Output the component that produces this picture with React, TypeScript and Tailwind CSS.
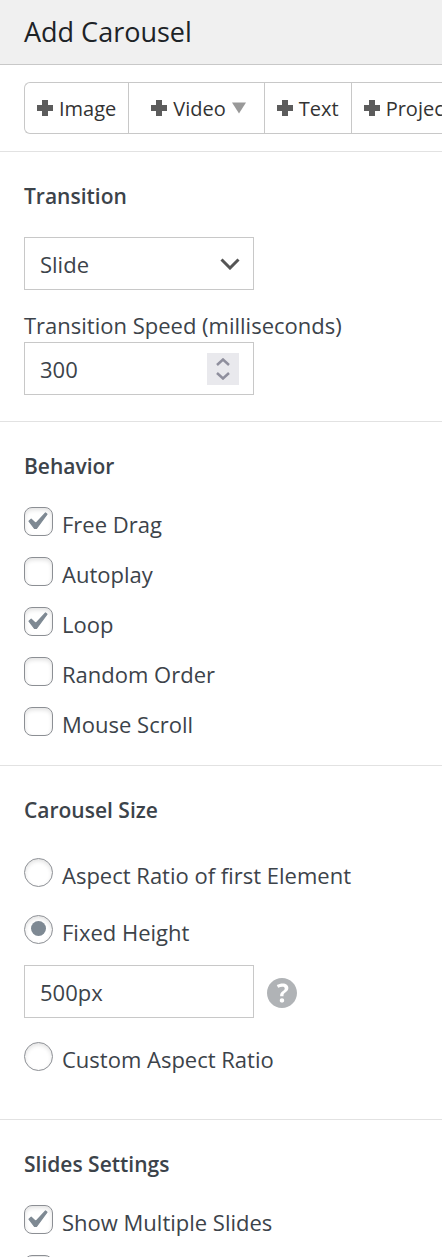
import { useState } from 'react';
import type { ReactNode } from 'react';

function PlusIcon() {
  return (
    <svg viewBox="0 0 16 16" className="size-4 shrink-0" aria-hidden="true">
      <path d="M5 0h6v5h5v6h-5v5H5v-5H0V5h5z" fill="#5c5c5c" />
    </svg>
  );
}

function AddButton({ label, wide = false }: { label: string; wide?: boolean }) {
  return (
    <button
      type="button"
      className={`flex shrink-0 items-center gap-1.5 border-r border-[#c8c8c8] text-xl text-[#333] last:border-r-0 ${
        wide ? 'pr-4.5 pl-5.5' : 'px-3'
      }`}
    >
      <PlusIcon />
      <span className="pt-0.5">{label}</span>
      {wide && (
        <svg viewBox="0 0 14 11" className="h-3 w-3.5" aria-hidden="true">
          <path d="M0 0h14L7 11z" fill="#999" />
        </svg>
      )}
    </button>
  );
}

function Section({ title, className, children }: { title: string; className: string; children: ReactNode }) {
  return (
    <section className={`border-b border-[#e2e2e2] px-6 pt-7 ${className}`}>
      <h2 className="text-[21px] leading-8 font-semibold">{title}</h2>
      {children}
    </section>
  );
}

function Check({ label, checked = false, hidden = '' }: { label?: string; checked?: boolean; hidden?: string }) {
  return (
    <label className="flex h-[29px] items-start gap-[9px]">
      <span className="grid size-[29px] shrink-0 place-items-center">
        <input
          type="checkbox"
          defaultChecked={checked}
          aria-label={hidden || undefined}
          className="peer col-start-1 row-start-1 size-[29px] appearance-none rounded-[8px] border border-[#8c8f94] bg-white shadow-[inset_0_2px_4px_rgba(0,0,0,0.12)]"
        />
        <svg
          viewBox="0 0 20 18"
          className="pointer-events-none z-10 col-start-1 row-start-1 mr-px mb-0.5 hidden h-[18px] w-5 peer-checked:block"
          aria-hidden="true"
        >
          <path
            d="M17.500 1L19 2.200 8.500 16.500H6.500L1 9.200 3.200 7.200 7.800 11.500z"
            fill="#7e8993"
            stroke="#7e8993"
            strokeWidth="1.200"
            strokeLinejoin="round"
          />
        </svg>
      </span>
      {label && <span className="pt-[3px] text-[22px] leading-7">{label}</span>}
    </label>
  );
}

function Radio({ label, checked = false }: { label: string; checked?: boolean }) {
  return (
    <label className="flex h-[29px] items-start gap-[9px]">
      <span className="grid size-[29px] shrink-0 place-items-center">
        <input
          type="radio"
          name="carousel-size"
          defaultChecked={checked}
          className="peer col-start-1 row-start-1 size-[29px] appearance-none rounded-full border border-[#8c8f94] bg-white shadow-[inset_0_2px_4px_rgba(0,0,0,0.12)]"
        />
        <span className="pointer-events-none z-10 col-start-1 row-start-1 mb-0.5 hidden size-[15px] rounded-full bg-[#7e8993] peer-checked:block" />
      </span>
      <span className="pt-[3px] text-[22px] leading-7">{label}</span>
    </label>
  );
}

export default function App() {
  const [speed, setSpeed] = useState(300);

  return (
    <main className="h-screen overflow-hidden bg-white font-['Open_Sans','Noto_Sans',sans-serif] text-[#3c434a]">
      <header className="border-b border-[#c8c8c8] bg-[#f0f0f0] px-6 py-3">
        <h1 className="text-[27px] leading-10 text-[#1d2327]">Add Carousel</h1>
      </header>

      <div className="border-b border-[#e2e2e2] py-[17px] pl-6">
        <div className="flex h-[52px] overflow-hidden rounded-l-md border border-r-0 border-[#c8c8c8]">
          <AddButton label="Image" />
          <AddButton label="Video" wide />
          <AddButton label="Text" />
          <AddButton label="Project" />
        </div>
      </div>

      <Section title="Transition" className="pb-[26px]">
        <div className="mt-[25px] grid w-[230px] items-center">
          <select
            aria-label="Transition"
            defaultValue="Slide"
            className="col-start-1 row-start-1 h-[53px] w-full appearance-none border border-[#c8c8c8] bg-white px-[15px] pt-px text-[22px]"
          >
            <option>Slide</option>
            <option>Fade</option>
          </select>
          <svg
            viewBox="0 0 20 12"
            className="pointer-events-none z-10 col-start-1 row-start-1 mr-3.5 h-3 w-5 justify-self-end"
            aria-hidden="true"
          >
            <path d="M1.500 1.500L10 10l8.500-8.500" fill="none" stroke="#555" strokeWidth="3" />
          </svg>
        </div>
        <label htmlFor="speed" className="mt-[19px] mb-px block text-[22px] leading-8">
          Transition Speed (milliseconds)
        </label>
        <div className="flex h-[53px] w-[230px] items-center border border-[#c8c8c8] pr-3.5 pl-[15px]">
          <input
            id="speed"
            type="number"
            value={speed}
            onChange={(event) => setSpeed(Number(event.target.value))}
            className="min-w-0 flex-1 appearance-none pt-px text-[22px] [-moz-appearance:textfield] [&::-webkit-inner-spin-button]:appearance-none"
          />
          <div className="flex size-8 flex-col bg-[#e9e9ed]">
            <button
              type="button"
              aria-label="Increase"
              onClick={() => setSpeed(speed + 1)}
              className="grid flex-1 place-items-center pt-0.5"
            >
              <svg viewBox="0 0 14 8" className="h-2 w-3.5" aria-hidden="true">
                <path d="M1 7l6-5.500L13 7" fill="none" stroke="#8f8f9d" strokeWidth="2.500" />
              </svg>
            </button>
            <button
              type="button"
              aria-label="Decrease"
              onClick={() => setSpeed(speed - 1)}
              className="grid flex-1 place-items-center pb-0.5"
            >
              <svg viewBox="0 0 14 8" className="h-2 w-3.5" aria-hidden="true">
                <path d="M1 1l6 5.500L13 1" fill="none" stroke="#8f8f9d" strokeWidth="2.500" />
              </svg>
            </button>
          </div>
        </div>
      </Section>

      <Section title="Behavior" className="pb-[29px]">
        <div className="mt-[25px] flex flex-col gap-[21px]">
          <Check label="Free Drag" checked />
          <Check label="Autoplay" />
          <Check label="Loop" checked />
          <Check label="Random Order" />
          <Check label="Mouse Scroll" />
        </div>
      </Section>

      <Section title="Carousel Size" className="pb-12">
        <div className="mt-8 flex flex-col gap-7">
          <Radio label="Aspect Ratio of first Element" />
          <Radio label="Fixed Height" checked />
        </div>
        <div className="mt-[21px] mb-6 flex items-center gap-[13px]">
          <input
            type="text"
            aria-label="Height"
            defaultValue="500px"
            className="h-[53px] w-[230px] border border-[#c8c8c8] bg-white px-[15px] pt-px text-[22px]"
          />
          <button type="button" aria-label="Help" className="pt-0.5">
            <svg viewBox="3 3 14 14" className="size-[30px]" aria-hidden="true">
              <path
                fill="#b0b3b6"
                d="M17 10c0-3.870-3.140-7-7-7-3.870 0-7 3.130-7 7s3.130 7 7 7c3.860 0 7-3.130 7-7zm-6.300 1.480H9.140v-.430c0-.380.080-.700.240-.980s.460-.570.880-.890c.410-.290.680-.530.810-.710.140-.180.200-.390.200-.620 0-.250-.090-.440-.280-.580-.190-.130-.450-.190-.790-.190-.580 0-1.250.150-2 .460l-.640-1.280c.870-.490 1.800-.740 2.770-.740.810 0 1.450.200 1.920.580.480.390.710.910.710 1.550 0 .430-.090.800-.290 1.110-.190.320-.570.670-1.110 1.060-.380.280-.610.490-.710.630-.100.150-.150.340-.150.570v.460zm-1.470 2.710c-.180-.180-.270-.420-.270-.730 0-.330.080-.580.260-.750s.430-.250.770-.250c.320 0 .570.090.750.260s.270.420.270.740c0 .310-.090.550-.270.730-.180.180-.430.270-.750.270-.340 0-.590-.090-.760-.270z"
              />
            </svg>
          </button>
        </div>
        <Radio label="Custom Aspect Ratio" />
      </Section>

      <Section title="Slides Settings" className="pb-[29px]">
        <div className="mt-[25px] flex flex-col gap-[21px]">
          <Check label="Show Multiple Slides" checked />
          <Check hidden="Center Slides" />
        </div>
      </Section>
    </main>
  );
}
